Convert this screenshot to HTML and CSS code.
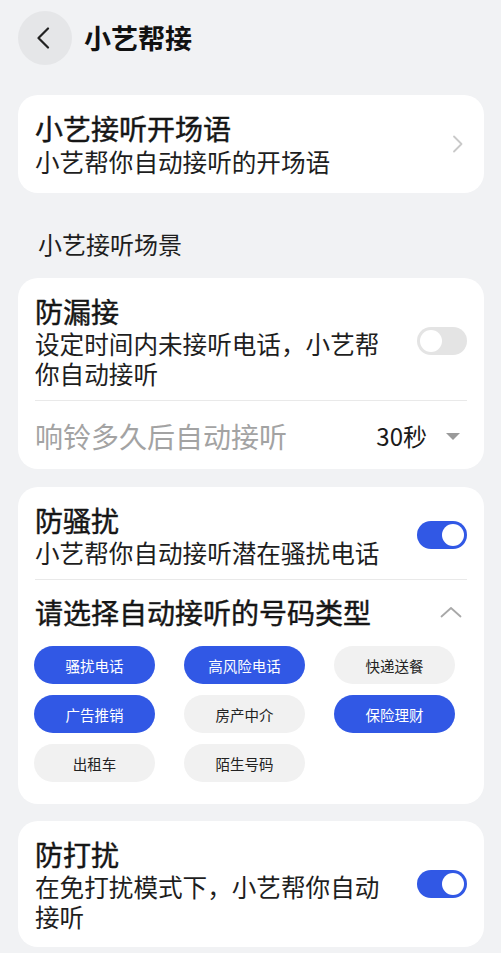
FILE: index.html
```html
<!DOCTYPE html>
<html lang="zh-CN">
<head>
<meta charset="utf-8">
<title>小艺帮接</title>
<link rel="stylesheet" href="styles.css">
</head>
<body>
<div class="page">
  <header class="topbar">
    <div class="back">
      <svg width="14" height="22" viewBox="0 0 14 22"><path d="M12 1.5 L2.5 11 L12 20.5" fill="none" stroke="#222" stroke-width="2.2" stroke-linecap="round" stroke-linejoin="round"/></svg>
    </div>
    <h1 class="page-title">小艺帮接</h1>
  </header>

  <section class="card card-link">
    <div class="row-main">
      <div class="text-col">
        <div class="item-title">小艺接听开场语</div>
        <div class="item-desc">小艺帮你自动接听的开场语</div>
      </div>
      <svg class="chev-right" width="12" height="18" viewBox="0 0 12 18"><path d="M2 1.5 L9.5 9 L2 16.5" fill="none" stroke="#c9c9c9" stroke-width="1.8" stroke-linecap="round" stroke-linejoin="round"/></svg>
    </div>
  </section>

  <div class="section-label">小艺接听场景</div>

  <section class="card">
    <div class="row-main with-toggle">
      <div class="text-col">
        <div class="item-title">防漏接</div>
        <div class="item-desc">设定时间内未接听电话，小艺帮你自动接听</div>
      </div>
      <div class="toggle"><span class="knob"></span></div>
    </div>
    <div class="divider"></div>
    <div class="row-select">
      <div class="select-label">响铃多久后自动接听</div>
      <div class="select-value">30秒<span class="tri"></span></div>
    </div>
  </section>

  <section class="card card-chips">
    <div class="row-main with-toggle">
      <div class="text-col">
        <div class="item-title">防骚扰</div>
        <div class="item-desc">小艺帮你自动接听潜在骚扰电话</div>
      </div>
      <div class="toggle on"><span class="knob"></span></div>
    </div>
    <div class="divider"></div>
    <div class="row-expand">
      <div class="expand-label">请选择自动接听的号码类型</div>
      <svg class="chev-up" width="22" height="12" viewBox="0 0 22 12"><path d="M1.5 10.5 L11 2 L20.5 10.5" fill="none" stroke="#a8a8a8" stroke-width="1.8" stroke-linecap="round" stroke-linejoin="round"/></svg>
    </div>
    <div class="chips">
      <span class="chip on">骚扰电话</span>
      <span class="chip on">高风险电话</span>
      <span class="chip">快递送餐</span>
      <span class="chip on">广告推销</span>
      <span class="chip">房产中介</span>
      <span class="chip on">保险理财</span>
      <span class="chip">出租车</span>
      <span class="chip">陌生号码</span>
    </div>
  </section>

  <section class="card card-last">
    <div class="row-main with-toggle">
      <div class="text-col">
        <div class="item-title">防打扰</div>
        <div class="item-desc">在免打扰模式下，小艺帮你自动接听</div>
      </div>
      <div class="toggle on"><span class="knob"></span></div>
    </div>
  </section>
</div>
</body>
</html>
```

FILE: styles.css
```css
* { box-sizing: border-box; }
html, body { margin: 0; padding: 0; }
body {
  background: #f1f2f4;
  font-family: "Noto Sans CJK SC", "Noto Sans", sans-serif;
  color: #1a1a1a;
  width: 501px;
  height: 953px;
  overflow: hidden;
}
.page { padding: 11px 17px 0 18px; }

.topbar {
  display: flex;
  align-items: center;
  height: 54px;
}
.back {
  width: 54px;
  height: 54px;
  border-radius: 50%;
  background: #e5e6e8;
  display: flex;
  align-items: center;
  justify-content: center;
  padding-right: 4px;
}
.page-title {
  margin: 0 0 0 12px;
  font-size: 27px;
  font-weight: 700;
  line-height: 34px;
  color: #111;
}

.card {
  background: #fff;
  border-radius: 20px;
  padding: 16px 17px 0 17px;
  margin-top: 18px;
}
.card-link { margin-top: 30px; padding-bottom: 16px; }

.row-main {
  display: flex;
  align-items: center;
}
.text-col { flex: 1; min-width: 0; }
.with-toggle .text-col { max-width: 362px; margin-right: auto; }
.with-toggle { margin-bottom: 12px; }

.item-title {
  font-size: 28px;
  font-weight: 400;
  -webkit-text-stroke: 0.45px currentColor;
  line-height: 34px;
  color: #161616;
}
.item-desc {
  font-size: 24.6px;
  line-height: 32px;
  color: #1e1e1e;
}
.with-toggle .item-desc { line-height: 30px; }

.chev-right { margin-right: 3px; }

.section-label {
  font-size: 24px;
  line-height: 32px;
  margin: 35px 0 15px 20px;
  color: #1e1e1e;
}

.toggle {
  width: 50px;
  height: 28px;
  border-radius: 14px;
  background: #e4e4e4;
  position: relative;
  flex: none;
}
.toggle .knob {
  position: absolute;
  top: 3px;
  left: 3px;
  width: 22px;
  height: 22px;
  border-radius: 50%;
  background: #fff;
}
.toggle.on { background: #3158e5; }
.toggle.on .knob { left: auto; right: 3px; }

.divider {
  height: 1px;
  background: #e9e9e9;
}

.row-select {
  display: flex;
  align-items: center;
  height: 68px;
  padding-top: 2px;
}
.select-label {
  flex: 1;
  font-size: 28px;
  color: #a3a3a3;
  line-height: 34px;
}
.select-value {
  display: flex;
  align-items: center;
  font-size: 24px;
  color: #1a1a1a;
  line-height: 32px;
}
.tri {
  width: 0;
  height: 0;
  border-left: 7px solid transparent;
  border-right: 7px solid transparent;
  border-top: 7px solid #9a9a9a;
  margin-left: 19px;
  margin-right: 7px;
}

.row-expand {
  display: flex;
  align-items: center;
  height: 66px;
  padding-bottom: 2px;
}
.expand-label {
  flex: 1;
  font-size: 28px;
  font-weight: 400;
  -webkit-text-stroke: 0.45px currentColor;
  line-height: 34px;
  color: #161616;
}
.chev-up { margin-right: 5px; }

.card-chips { padding-bottom: 22px; }
.chips {
  display: grid;
  grid-template-columns: repeat(3, 121px);
  column-gap: 29px;
  row-gap: 11px;
  margin-left: -1px;
}
.chip {
  height: 38px;
  border-radius: 19px;
  background: #f1f1f1;
  color: #222;
  font-size: 14.5px;
  display: flex;
  align-items: center;
  justify-content: center;
}
.chip.on { background: #3158e5; color: #fff; }

.card-last { margin-top: 17px; padding-bottom: 4px; }
```
